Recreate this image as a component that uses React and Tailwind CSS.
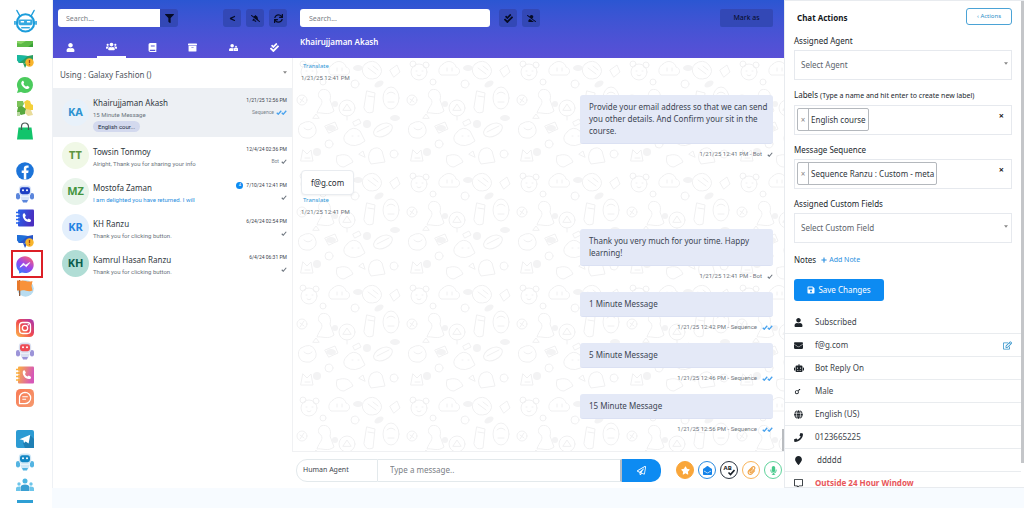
import {
  FaUser, FaUsers, FaBook, FaArchive, FaUserLock, FaCheckDouble, FaFilter, FaLessThan,
  FaBellSlash, FaUserSlash, FaRegPaperPlane, FaStar, FaEnvelopeOpen, FaPaperclip,
  FaMicrophone, FaSave, FaEnvelope, FaRobot, FaMars, FaGlobe, FaPhone, FaMapMarker,
  FaRegCommentAlt, FaRegEdit, FaPlus, FaSync,
} from "react-icons/fa";

/* ---------- Sidebar drawings ---------- */

const S = ({ children, size = "size-[18px]" }) => (
  <svg viewBox="0 0 18 18" className={size} aria-hidden="true">{children}</svg>
);

const BotLogo = () => (
  <svg viewBox="0 0 24 26" className="h-[25px] w-[23px]" aria-hidden="true">
    <path d="M3 1.500l3 5.500M21 1.500l-3 5.500" stroke="#1c9ddb" strokeWidth="1.500" strokeLinecap="round" />
    <circle cx="12" cy="14.500" r="9" fill="#fff" stroke="#1c9ddb" strokeWidth="2.200" />
    <path d="M4.500 11h15v3c0 2.500-1.500 3-3 3h-9c-1.500 0-3-.5-3-3z" fill="#35a9e0" />
    <path d="M7 13.200h3.500M13.500 13.200h3.500" stroke="#fff" strokeWidth="1.600" />
    <path d="M7.500 19.500h9" stroke="#35a9e0" strokeWidth="1.500" />
    <path d="M1 12.500v4M23 12.500v4" stroke="#1c9ddb" strokeWidth="1.600" />
  </svg>
);

const GreenStrip = () => (
  <svg viewBox="0 0 18 6" className="h-[6px] w-[18px]" aria-hidden="true">
    <rect x="1" width="16" height="6" fill="#5cba47" />
    <path d="M1 0h9l-5 3-4-1z" fill="#8ad467" />
    <path d="M12 6l5-4v4z" fill="#39a038" />
  </svg>
);

const Campaign = ({ main, dark }) => (
  <S>
    <path d="M1 3l11 1 5-1v9l-6 1-3-2-5 0-2-3z" fill={main} />
    <path d="M1 3l11 1-5 4-4 3-2-3z" fill={dark} />
    <path d="M7 11l2 5 2-4z" fill={main} />
    <circle cx="13.500" cy="10.500" r="4.200" fill="#f8b52b" />
    <path d="M13.500 8v3.300M13.500 12.200v1" stroke="#a8481c" strokeWidth="1.300" />
  </S>
);

const WhatsApp = () => (
  <S>
    <path d="M9 1a8 8 0 0 1 0 16 8 8 0 0 1-4-1L1 17l1.200-3.800A8 8 0 0 1 9 1z" fill="#4bcb5d" />
    <path d="M6.300 5c.5-.4 1-.3 1.200.2l.6 1.400c.2.5-.7 1-.6 1.400.5 1.200 1.500 2.100 2.700 2.600.5.1.9-.9 1.400-.7l1.500.8c.4.300.3.900 0 1.400-1 1.300-2.600 1-4 .300C7.300 11.500 6 10 5.400 8.300 5 7 5.300 5.800 6.300 5z" fill="#fff" />
  </S>
);

const Puzzle = () => (
  <S>
    <path d="M1 2h6l1 3-2 3-5 0z" fill="#7cc35a" />
    <path d="M8 3l3-2 3 1 1 3 2 1v5H9V6z" fill="#f4d03a" />
    <path d="M2 8l4-1 4 3-1 5-4 1-4-3z" fill="#58a83f" />
    <path d="M10 10l5 1 2 5-5 1-3-3z" fill="#e9dc9a" />
    <path d="M1 13h3v4H1z" fill="#b8d8a0" />
  </S>
);

const Bag = () => (
  <S>
    <path d="M2.500 5.500h13l1.500 12H1z" fill="#12c46b" />
    <path d="M5.500 8V4.500a3.500 3.500 0 0 1 7 0V8" fill="none" stroke="#4c5a55" strokeWidth="1.200" />
  </S>
);

const Facebook = () => (
  <S>
    <circle cx="9" cy="9" r="8.800" fill="#1c74d9" />
    <path d="M7.800 17.600v-6.500H5.700V8.600h2.100V6.800c0-2.200 1.200-3.300 3.200-3.300.9 0 1.600.1 1.600.1v2.100h-1c-1 0-1.300.6-1.300 1.300v1.600h2.300l-.4 2.500h-1.900v6.500z" fill="#fff" />
  </S>
);

const Bot = ({ face, body, limb }) => (
  <S>
    <rect x="0" y="8" width="4" height="6.500" rx="2" fill={limb} />
    <rect x="14" y="8" width="4" height="6.500" rx="2" fill={limb} />
    <rect x="2.800" y=".5" width="12.400" height="10.500" rx="4" fill={body} />
    <rect x="4" y="2.200" width="10" height="7" rx="2.400" fill={face} />
    <circle cx="7" cy="5.200" r="1" fill="#fff" />
    <circle cx="11" cy="5.200" r="1" fill="#fff" />
    <path d="M4 11.500h10l-1.500 4H5.500z" fill={body} />
    <path d="M6 15h6l-1 2.500H7z" fill={limb} />
  </S>
);

const PhoneBook = ({ id, from, to }) => (
  <S>
    <defs>
      <linearGradient id={id} x1="0" x2="1" y1="0" y2="0.300">
        <stop offset="0" stopColor={from} /><stop offset="1" stopColor={to} />
      </linearGradient>
    </defs>
    <rect x="2" y=".5" width="16" height="17" rx="1" fill={`url(#${id})`} />
    <path d="M0 3.500h4M0 7h4M0 10.500h4M0 14h4" stroke={from} strokeWidth="1.400" />
    <path d="M1.500 5.200h2M1.500 8.700h2M1.500 12.200h2" stroke="#fff" strokeWidth=".7" />
    <path d="M7 4.800l1.700-.6 1.200 2.600-1 1.100c.6 1.300 1.500 2.200 2.700 2.700l1.200-1 2.300 1.400-.5 1.800c-4.600 1.500-9-3.500-7.600-8z" fill="#fff" />
  </S>
);

const Messenger = () => (
  <S>
    <defs>
      <linearGradient id="msgr" x1="0.200" x2="0.800" y1="1" y2="0">
        <stop offset="0" stopColor="#2b7cff" /><stop offset=".5" stopColor="#9b45ec" /><stop offset="1" stopColor="#ff6272" />
      </linearGradient>
    </defs>
    <path d="M9 .3C4 .3.3 3.900.3 8.700c0 2.500 1 4.700 2.700 6.200L3.200 17.500l2.700-1c1 .3 2 .5 3.100.5 5 0 8.700-3.600 8.700-8.300S14 .3 9 .3z" fill="url(#msgr)" />
    <path d="M4 11.200l3.300-4 2.500 2 3.900-2.600-3.300 4.100-2.500-2z" fill="#fff" stroke="#fff" strokeWidth=".8" strokeLinejoin="round" />
  </S>
);

const Flag = () => (
  <S>
    <circle cx="9.500" cy="9.500" r="8.300" fill="#b8dcf0" />
    <path d="M3 1h1.300v16H3z" fill="#8c5a3c" />
    <path d="M4 2c4-2 7 2 12.500 0l-1 5 1 4.500C12 13.500 8 10 4 12z" fill="#f8923a" />
    <path d="M1 1.500h3v10H1z" fill="#e8792a" />
  </S>
);

const Instagram = () => (
  <S>
    <defs>
      <linearGradient id="insta" x1="0" x2="1" y1="1" y2="0">
        <stop offset="0" stopColor="#fdbb4c" /><stop offset=".5" stopColor="#f0484f" /><stop offset="1" stopColor="#a336b8" />
      </linearGradient>
    </defs>
    <rect width="18" height="18" rx="4.500" fill="url(#insta)" />
    <rect x="3.500" y="3.500" width="11" height="11" rx="3.200" fill="none" stroke="#fff" strokeWidth="1.300" />
    <circle cx="9" cy="9" r="2.700" fill="none" stroke="#fff" strokeWidth="1.300" />
    <circle cx="12.300" cy="5.700" r=".8" fill="#fff" />
  </S>
);

const ChatTile = () => (
  <S>
    <defs>
      <linearGradient id="ctile" x1="0" x2="1" y1="0" y2="1">
        <stop offset="0" stopColor="#f97a55" /><stop offset="1" stopColor="#f59a6f" />
      </linearGradient>
    </defs>
    <rect width="18" height="18" rx="4.500" fill="url(#ctile)" />
    <path d="M9 3.300a5.700 5.700 0 1 1 0 11.400H3.500V9A5.600 5.600 0 0 1 9 3.300z" fill="none" stroke="#fff" strokeWidth="1.200" />
    <path d="M6.300 7.800h5.500M6.300 10.200h3.800" stroke="#fff" strokeWidth="1.100" />
  </S>
);

const TelegramTile = () => (
  <S>
    <rect width="18" height="18" rx="2" fill="#2c9bd3" />
    <path d="M14 5l4 4v9H9l-2-5z" fill="#1f7fb4" />
    <path d="M3.500 9.200L14.300 4.800l-1.700 8.800-3-2-1.600 1.500-.5-2.800z" fill="#fff" />
  </S>
);

const Group = () => (
  <S>
    <circle cx="9" cy="4" r="2.500" fill="#4db6e2" />
    <circle cx="3" cy="7" r="1.700" fill="#6cc5ea" />
    <circle cx="15" cy="7" r="1.700" fill="#6cc5ea" />
    <path d="M4.500 14V10.500c0-2 2-3 4.500-3s4.500 1 4.500 3V14z" fill="#3a9fd2" />
    <path d="M0 14v-2.500C0 10 1.500 9.300 4 9.500V14zM18 14v-2.500c0-1.500-1.500-2.200-4-2V14z" fill="#6cc5ea" />
  </S>
);

const BlueStrip = () => (
  <svg viewBox="0 0 18 3" className="h-[3px] w-[18px]" aria-hidden="true">
    <rect x="1" width="16" height="3" fill="#2f9fd4" />
  </svg>
);

const SideLink = ({ label, children }) => (
  <a href="#" aria-label={label} className="relative block">{children}</a>
);

function Sidebar() {
  return (
    <nav aria-label="Channels" className="flex w-[52px] shrink-0 flex-col items-center bg-white pt-[9px] pr-0.5">
      <SideLink label="Home"><BotLogo /></SideLink>
      <div className="mt-[7px] flex h-[99px] flex-col justify-between">
        <SideLink label="Plans"><GreenStrip /></SideLink>
        <SideLink label="WhatsApp campaign"><Campaign main="#2a9d62" dark="#19b8a0" /></SideLink>
        <SideLink label="WhatsApp"><WhatsApp /></SideLink>
        <SideLink label="Integrations"><Puzzle /></SideLink>
        <SideLink label="Store"><Bag /></SideLink>
      </div>
      <div className="mt-[22px] flex h-[135px] flex-col justify-between">
        <SideLink label="Facebook"><Facebook /></SideLink>
        <SideLink label="Facebook bot"><Bot face="#1d3fc4" body="#d5e2f8" limb="#5b86dc" /></SideLink>
        <SideLink label="Facebook contacts"><PhoneBook id="pbook1" from="#2563eb" to="#4a2fc0" /></SideLink>
        <SideLink label="Facebook campaign"><Campaign main="#2754c8" dark="#1e6fd8" /></SideLink>
        <SideLink label="Messenger live chat">
          <Messenger />
          <span className="absolute -top-[6px] -left-[5px] h-[28px] w-[32px] border-2 border-[#dc1f26]" />
        </SideLink>
        <SideLink label="Pages"><Flag /></SideLink>
      </div>
      <div className="mt-[22px] flex h-[88px] flex-col justify-between">
        <SideLink label="Instagram"><Instagram /></SideLink>
        <SideLink label="Instagram bot"><Bot face="#ee4b54" body="#d9dff0" limb="#9c94d8" /></SideLink>
        <SideLink label="Instagram contacts"><PhoneBook id="pbook2" from="#fbb040" to="#d657b8" /></SideLink>
        <SideLink label="Instagram live chat"><ChatTile /></SideLink>
      </div>
      <div className="mt-[23px] flex h-[73px] flex-col justify-between">
        <SideLink label="Telegram"><TelegramTile /></SideLink>
        <SideLink label="Telegram bot"><Bot face="#1387c4" body="#cfe7f6" limb="#54b4e2" /></SideLink>
        <SideLink label="Telegram groups"><Group /></SideLink>
        <SideLink label="Telegram more"><BlueStrip /></SideLink>
      </div>
    </nav>
  );
}

/* ---------- Shared pieces ---------- */

const DarkButton = ({ label, children }) => (
  <button aria-label={label} className="flex size-[18px] shrink-0 items-center justify-center rounded-[3px] bg-[#3348b6] text-[9px] text-[#060b26]">
    {children}
  </button>
);

const Ticks = ({ read }) =>
  read ? (
    <svg viewBox="0 0 22 10" className="h-[5px] w-[11px]" aria-label="Read">
      <path d="M1.500 5.500l3 3 6-7M11.500 5.500l3 3 6-7" fill="none" stroke="#4aa3ee" strokeWidth="2.600" />
    </svg>
  ) : (
    <svg viewBox="0 0 12 10" className="h-[5px] w-[6px]" aria-label="Sent">
      <path d="M1.500 5.500l3 3 6-7" fill="none" stroke="#6f7780" strokeWidth="2.200" />
    </svg>
  );

const Caret = () => (
  <svg viewBox="0 0 6 4" className="pointer-events-none h-[3px] w-[4px]" aria-hidden="true">
    <path d="M0 0h6L3 4z" fill="#888" />
  </svg>
);

/* ---------- Conversation list ---------- */

const tabs = [
  ["Mine", FaUser], ["All subscribers", FaUsers], ["Unread", FaBook],
  ["Archived", FaArchive], ["Blocked", FaUserLock], ["Resolved", FaCheckDouble],
];

const conversations = [
  { initials: "KA", name: "Khairujjaman Akash", text: "15 Minute Message", time: "1/21/25 12:56 PM", by: "Sequence", read: true, tag: "English cour...", tone: "bg-[#e8f1fa] text-[#2d93d1]", active: true },
  { initials: "TT", name: "Towsin Tonmoy", text: "Alright, Thank you for sharing your info", time: "12/4/24 02:36 PM", by: "Bot", tone: "bg-[#f0f8e6] text-[#5f9440]" },
  { initials: "MZ", name: "Mostofa Zaman", text: "I am delighted you have returned. I will", time: "7/10/24 12:41 PM", unread: 4, tone: "bg-[#e8f4ea] text-[#43943f]" },
  { initials: "KR", name: "KH Ranzu", text: "Thank you for clicking button.", time: "6/24/24 02:54 PM", tone: "bg-[#e3effc] text-[#2583e2]" },
  { initials: "KH", name: "Kamrul Hasan Ranzu", text: "Thank you for clicking button.", time: "6/4/24 06:31 PM", tone: "bg-[#b0ddd5] text-[#0a5c4c]" },
];

function Conversation({ c }) {
  return (
    <li>
      <a href="#" className={c.active ? "flex h-[49px] bg-[#edf0f4] pr-[5px] pl-[9px]" : "flex h-9 pr-[5px] pl-[9px]"}>
        <span className={`flex size-[27px] shrink-0 items-center justify-center self-center rounded-full text-[11px] font-bold ${c.tone}`}>
          {c.initials}
        </span>
        <span className="ml-[4px] flex min-w-0 flex-1 flex-col items-start pt-[9px]">
          <span className="text-[8px] leading-3 text-[#2f3740]">{c.name}</span>
          <span className={c.unread ? "font-[Roboto,sans-serif] text-[6px] leading-[11px] whitespace-nowrap text-[#2b8fe0]" : "font-[Roboto,sans-serif] text-[6px] leading-[11px] whitespace-nowrap text-[#6b747d]"}>{c.text}</span>
          {c.tag && (
            <span className="mt-px rounded-full bg-[#d3d9ee] px-[5px] font-[Roboto,sans-serif] text-[6px] leading-[11px] text-[#222a3a]">{c.tag}</span>
          )}
        </span>
        <span className="flex shrink-0 flex-col items-end pt-[6px] font-[Roboto,sans-serif]">
          <span className="flex items-center gap-[3px] text-[5px] leading-3 text-[#3b434c]">
            {c.unread && <b className="flex size-[7px] items-center justify-center rounded-full bg-[#0d8bf2] text-[4px] font-normal text-white">{c.unread}</b>}
            {c.time}
          </span>
          <span className="flex items-center gap-[2px] text-[5px] leading-3 text-[#7a838c]">
            {c.by}
            <span className="flex h-3 items-center"><Ticks read={c.read} /></span>
          </span>
        </span>
      </a>
    </li>
  );
}

function ConversationPanel() {
  return (
    <section className="flex w-[240px] shrink-0 flex-col border-l border-[#eef1f5] bg-white">
      <div className="flex h-[58px] flex-col bg-linear-to-b from-[#2b56d2] to-[#5950d6] pt-[9px]">
        <div className="flex items-center pr-[5px] pl-[5px]">
          <input aria-label="Search conversations" placeholder="Search..." className="h-[18px] w-[102px] rounded-l-[3px] bg-white px-[8px] text-[7px] placeholder:text-[#7b8086]" />
          <button aria-label="Filter" className="flex h-[18px] w-[18px] items-center justify-center rounded-r-[3px] bg-[#3348b6] text-[9px] text-[#060b26]"><FaFilter /></button>
          <div className="ml-auto flex gap-[5px]">
            <DarkButton label="Collapse"><FaLessThan className="size-[7px]" /></DarkButton>
            <DarkButton label="Mute"><FaBellSlash /></DarkButton>
            <DarkButton label="Refresh"><FaSync /></DarkButton>
          </div>
        </div>
        <div role="tablist" className="mt-auto flex justify-between px-[3px]">
          {tabs.map(([label, Icon], i) => (
            <button
              key={label} role="tab" aria-label={label} aria-selected={i === 1}
              className={i === 1
                ? "flex h-[21px] w-[29px] items-center justify-center border-b-2 border-white text-[11px] text-white"
                : "flex h-[21px] w-[29px] items-center justify-center text-[9px] text-white"}
            >
              <Icon />
            </button>
          ))}
        </div>
      </div>
      <div className="relative">
        <select aria-label="Page" className="h-[30px] w-full appearance-none bg-white pt-[4px] pl-[7px] text-[8px] text-[#4d545c]">
          <option>Using : Galaxy Fashion ()</option>
        </select>
        <span className="pointer-events-none absolute top-[13px] right-[5px]"><Caret /></span>
      </div>
      <ul className="min-h-0 flex-1">
        {conversations.map((c) => <Conversation key={c.initials} c={c} />)}
      </ul>
    </section>
  );
}

/* ---------- Chat ---------- */

function Doodles() {
  return (
    <svg className="absolute inset-0 size-full" aria-hidden="true">
      <defs>
        <pattern id="doodle" width="110" height="112" patternUnits="userSpaceOnUse">
          <g fill="none" stroke="#f0f0f1" strokeWidth="1" strokeLinecap="round">
            <circle cx="16" cy="14" r="8" /><circle cx="10" cy="6" r="3" /><circle cx="23" cy="7" r="3" />
            <path d="M13 13h1M19 13h1M14 17q2 2 4 0" />
            <path d="M40 6c5-5 12-2 13 3 4 1 5 6 1 8H38c-4-3-2-9 2-11z" />
            <path d="M44 10v3M49 10v3" />
            <path d="M72 6q8-6 14 1t-2 13q-9 3-13-3t1-11zM75 10l8 6M80 8l5 4" />
            <path d="M97 12l7-5 3 7-6 5z" /><circle cx="62" cy="26" r="4" />
            <circle cx="9" cy="42" r="5" /><path d="M7 41l4 3M11 39l-4 6" />
            <path d="M28 32c7-3 11 4 9 10l4 11c-6 5-12 1-17 2 2-7 7-9 4-14-4-2-3-7 0-9z" />
            <circle cx="54" cy="50" r="8" /><path d="M50 52l4-6 4 6zM54 58v4" />
            <path d="M74 33l8 2-2 19q-7 3-9-4zM75 38l6 1" />
            <ellipse cx="98" cy="40" rx="8" ry="11" /><path d="M94 36q4-4 8 0M95 44h6" />
            <path d="M8 66q10-6 14 2t-5 12q-9 1-11-5t2-9zM11 70q4 4 8 0" />
            <path d="M32 68l10-4 3 7-9 4z" /><circle cx="36" cy="86" r="4" />
            <path d="M54 74q6-7 13-1l5 10q-10 8-19 2-5-5 1-11zM59 78h1M65 78h1" />
            <ellipse cx="90" cy="72" rx="10" ry="6" transform="rotate(-25 90 72)" /><path d="M84 74l12-6" />
            <path d="M10 92l4 4 4-4 2 11H8zM12 100h5" />
            <path d="M44 98c8-3 13-1 16 6l-9 5c-6 0-9-5-7-11z" />
            <path d="M78 92q7-5 11 1l3 11-14 2q-5-7 0-14z" /><circle cx="101" cy="96" r="4" />
            <circle cx="30" cy="24" r="3" /><path d="M60 64l6-3 2 4-6 3zM20 60l3-4 3 4zM66 96l4-3 2 6z" />
          </g>
          <g fill="#f3f3f4">
            <ellipse cx="65" cy="10" rx="5" ry="3" /><circle cx="42" cy="46" r="3" />
            <ellipse cx="86" cy="26" rx="5" ry="3" transform="rotate(-30 86 26)" />
            <ellipse cx="38" cy="70" rx="5" ry="3" /><circle cx="24" cy="94" r="4" /><circle cx="74" cy="66" r="4" />
            <ellipse cx="102" cy="60" rx="5" ry="3" />
          </g>
        </pattern>
      </defs>
      <rect width="100%" height="100%" fill="url(#doodle)" />
    </svg>
  );
}

const Incoming = ({ text, time }) => (
  <div className="mb-3 flex flex-col items-start">
    {text && <p className="rounded-[4px] border border-[#e9ecf0] bg-white px-[9px] pt-[6px] pb-[5px] text-[8px] leading-3 text-[#262c33] shadow-xs">{text}</p>}
    <a href="#" className="ml-[2px] text-[6px] leading-[11px] text-[#2e97d8]">Translate</a>
    <time className="font-[Roboto,sans-serif] text-[6px] leading-[11px] text-[#6b7178]">{time}</time>
  </div>
);

const Outgoing = ({ text, meta, read }) => (
  <div className="flex flex-col items-end">
    <p className="w-[193px] rounded-[3px] border-b border-[#dbe1f3] bg-[#e4e9f7] py-1.5 pr-1 pl-[9px] text-[8px] leading-3 text-[#3c4553]">{text}</p>
    <p className="mt-1 mb-2.5 flex items-center gap-[5px] font-[Roboto,sans-serif] text-[6px] leading-3 text-[#6f767e]">
      {meta}
      <Ticks read={read} />
    </p>
  </div>
);

const RoundButton = ({ label, tone, children }) => (
  <button aria-label={label} className={`flex size-[18px] shrink-0 items-center justify-center rounded-full border text-[9px] ${tone}`}>
    {children}
  </button>
);

const SpellCheck = () => (
  <svg viewBox="0 0 12 12" className="size-[12px]" aria-hidden="true">
    <text x="0.500" y="6" fontSize="6" fontWeight="700" fill="#161d26">AB</text>
    <path d="M5.500 8.500l2 2 4-4.500" fill="none" stroke="#161d26" strokeWidth="1.600" />
  </svg>
);

function ChatPanel() {
  return (
    <section className="flex min-w-0 flex-1 flex-col bg-white">
      <header className="h-[58px] bg-linear-to-b from-[#2b56d2] to-[#5950d6] pt-[9px] pr-[11px] pl-2">
        <div className="flex items-center gap-[5px]">
          <input aria-label="Search messages" placeholder="Search..." className="mr-1 h-[18px] w-[190px] rounded-[3px] bg-white px-[9px] text-[7px] placeholder:text-[#7b8086]" />
          <DarkButton label="Mark resolved"><FaCheckDouble /></DarkButton>
          <DarkButton label="Block user"><FaUserSlash /></DarkButton>
          <button className="ml-auto h-[18px] w-[53px] rounded-[2px] bg-[#3348b6] text-[7px] text-[#060b26]">Mark as</button>
        </div>
        <h1 className="mt-[9px] text-[8px] leading-3 font-semibold text-white">Khairujjaman Akash</h1>
      </header>
      <div className="relative min-h-0 flex-1 overflow-hidden border-b border-l border-[#f0f1f3]">
        <Doodles />
        <div className="relative pt-[3px] pr-[11px] pl-2">
          <Incoming time="1/21/25 12:41 PM" />
          <Outgoing text="Provide your email address so that we can send you other details. And Confirm your sit in the course." meta="1/21/25 12:41 PM - Bot" />
          <Incoming text="f@g.com" time="1/21/25 12:41 PM" />
          <Outgoing text="Thank you very much for your time. Happy learning!" meta="1/21/25 12:41 PM - Bot" />
          <Outgoing text="1 Minute Message" meta="1/21/25 12:42 PM - Sequence" read />
          <Outgoing text="5 Minute Message" meta="1/21/25 12:46 PM - Sequence" read />
          <Outgoing text="15 Minute Message" meta="1/21/25 12:56 PM - Sequence" read />
        </div>
        <span className="absolute right-0 bottom-0 h-[22px] w-[2px] bg-[#b9bcc0]" />
      </div>
      <footer className="flex h-9 shrink-0 items-center gap-1 pr-[2px] pl-1">
        <form className="mr-[11px] flex h-[23px] min-w-0 flex-1" onSubmit={(e) => e.preventDefault()}>
          <select aria-label="Message tag" className="w-[82px] appearance-none rounded-l-[11px] border border-[#e3e9ec] bg-white pl-[6px] text-[7px] text-[#3f474f]">
            <option>Human Agent</option>
          </select>
          <input aria-label="Message" placeholder="Type a message.." className="min-w-0 flex-1 border-y border-r-2 border-[#e3e9ec] border-r-[#b4bcc6] pl-3 text-[8px] placeholder:text-[#7b8086]" />
          <button aria-label="Send" className="flex w-[39px] items-center justify-center rounded-r-[10px] bg-[#0d8bf2] text-[9px] text-white"><FaRegPaperPlane /></button>
        </form>
        <RoundButton label="Saved replies" tone="border-[#f9a63a] bg-[#f9a63a] text-white"><FaStar /></RoundButton>
        <RoundButton label="Templates" tone="border-[#2b8be0] bg-white text-[#1484ea]"><FaEnvelopeOpen /></RoundButton>
        <RoundButton label="Spell check" tone="border-[#2b3440] bg-white text-[#161d26]"><SpellCheck /></RoundButton>
        <RoundButton label="Attach file" tone="border-[#f9b45a] bg-white text-[#f0a040]"><FaPaperclip /></RoundButton>
        <RoundButton label="Record audio" tone="border-[#5fd39c] bg-white text-[#45c98a]"><FaMicrophone /></RoundButton>
      </footer>
    </section>
  );
}

/* ---------- Chat actions ---------- */

const label = "block text-[8px] leading-[12px] text-[#22272d]";

const SelectField = ({ id, title, value }) => (
  <div>
    <label htmlFor={id} className={label}>{title}</label>
    <div className="relative mt-[3px]">
      <select id={id} className="h-[30px] w-full appearance-none border border-[#e6e9ee] bg-white pl-[6px] text-[8px] text-[#5d646c]">
        <option>{value}</option>
      </select>
      <span className="pointer-events-none absolute top-[12px] right-[4px]"><Caret /></span>
    </div>
  </div>
);

const TagField = ({ id, title, hint, tag }) => (
  <div>
    <label htmlFor={id} className={label}>{title} {hint && <span className="text-[7px]">{hint}</span>}</label>
    <div className="mt-[3px] flex h-[30px] items-start border border-[#e6e9ee] pt-[2px] pr-[7px] pl-[2px]">
      <span className="flex h-[23px] shrink-0 items-stretch rounded-[2px] border border-[#b4b8bd] text-[8px] text-[#30363d]">
        <button aria-label={`Remove ${tag}`} className="flex w-[11px] items-center justify-center border-r border-[#b4b8bd] text-[8px] text-[#888]">×</button>
        <span className="flex items-center px-[2px]">{tag}</span>
      </span>
      <input id={id} className="h-[23px] min-w-0 flex-1" />
      <button aria-label={`Clear ${title}`} className="mt-[2px] text-[9px] leading-3 font-bold text-[#222]">×</button>
    </div>
  </div>
);

const details = [
  [FaUser, "Subscribed"], [FaEnvelope, "f@g.com"], [FaRobot, "Bot Reply On"], [FaMars, "Male"],
  [FaGlobe, "English (US)"], [FaPhone, "0123665225"], [FaMapMarker, "ddddd"], [FaRegCommentAlt, "Outside 24 Hour Window"],
];

function ActionsPanel() {
  return (
    <aside className="relative w-[240px] shrink-0 overflow-hidden border-t border-b border-l border-[#e8ebef] bg-white pr-[3px]">
      <div className="pt-[7px] pr-[9px] pl-[9px]">
        <div className="flex h-[17px] items-center justify-between">
          <h2 className="pt-[3px] pl-[3px] text-[8px] leading-3 font-bold text-[#14181d]">Chat Actions</h2>
          <button className="h-[17px] w-[46px] rounded-[3px] border border-[#4ba3d6] text-[6px] text-[#2b8fc9]">‹ Actions</button>
        </div>
        <div className="mt-[10px] flex flex-col gap-[9px]">
          <SelectField id="agent" title="Assigned Agent" value="Select Agent" />
          <TagField id="labels" title="Labels" hint="(Type a name and hit enter to create new label)" tag="English course" />
          <TagField id="sequence" title="Message Sequence" tag="Sequence Ranzu : Custom - meta" />
          <SelectField id="field" title="Assigned Custom Fields" value="Select Custom Field" />
        </div>
        <div className="mt-[11px] flex items-center gap-[5px] text-[8px] leading-3 text-[#22272d]">
          Notes
          <button className="flex items-center gap-[2px] text-[7px] text-[#2b8fe0]"><FaPlus className="size-[6px]" />Add Note</button>
        </div>
        <button className="mt-[13px] flex h-[22px] w-[90px] items-center justify-center gap-[3px] rounded-[3px] bg-[#0d8bf2] text-[8px] text-white">
          <FaSave />Save Changes
        </button>
      </div>
      <ul className="mt-[10px]">
        {details.map(([Icon, text], i) => (
          <li key={text} className={i === 7 ? "flex h-[22px] items-center px-[9px] text-[8px]" : "flex h-[23px] items-center border-b border-[#e9ecef] px-[9px] text-[8px] text-[#3d444b]"}>
            <span className="flex w-[21px] shrink-0 text-[#1d2329]"><Icon className={i === 3 ? "size-[7px]" : i === 2 ? "size-[10px]" : "size-[9px]"} /></span>
            <span className={i === 7 ? "font-bold text-[#e8565a]" : i === 6 ? "pl-[2px]" : ""}>{text}</span>
            {i === 1 && <button aria-label="Edit email" className="ml-auto text-[9px] text-[#2b8fc9]"><FaRegEdit /></button>}
          </li>
        ))}
      </ul>
      <span className="absolute top-0 right-0 h-[95%] w-[3px] bg-[#c4c6c9]" />
    </aside>
  );
}

export default function App() {
  return (
    <div className="flex h-screen overflow-hidden bg-[#f7fbff] font-['Noto_Sans','Open_Sans',sans-serif]">
      <Sidebar />
      <main className="flex min-w-0 flex-1 pb-5">
        <ConversationPanel />
        <ChatPanel />
        <ActionsPanel />
      </main>
    </div>
  );
}
